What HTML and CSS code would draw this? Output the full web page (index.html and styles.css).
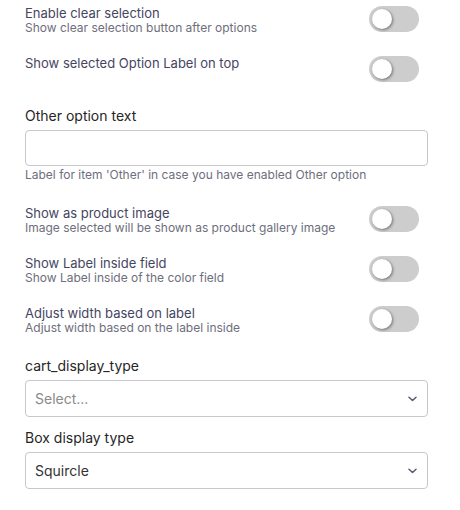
FILE: index.html
```html
<!DOCTYPE html>
<html>
<head>
<meta charset="utf-8">
<link rel="stylesheet" href="styles.css">
</head>
<body>
<div class="panel">
  <div class="toggle-row">
    <div class="toggle-text">
      <div class="t-title">Enable clear selection</div>
      <div class="t-sub">Show clear selection button after options</div>
    </div>
    <span class="switch"><span class="knob"></span></span>
  </div>
  <div class="toggle-row">
    <div class="toggle-text">
      <div class="t-title">Show selected Option Label on top</div>
    </div>
    <span class="switch"><span class="knob"></span></span>
  </div>

  <div class="field first-field">
    <label class="f-label">Other option text</label>
    <input class="text-input" type="text">
    <div class="f-help">Label for item 'Other' in case you have enabled Other option</div>
  </div>

  <div class="toggle-row">
    <div class="toggle-text">
      <div class="t-title">Show as product image</div>
      <div class="t-sub">Image selected will be shown as product gallery image</div>
    </div>
    <span class="switch"><span class="knob"></span></span>
  </div>
  <div class="toggle-row">
    <div class="toggle-text">
      <div class="t-title">Show Label inside field</div>
      <div class="t-sub">Show Label inside of the color field</div>
    </div>
    <span class="switch"><span class="knob"></span></span>
  </div>
  <div class="toggle-row">
    <div class="toggle-text">
      <div class="t-title">Adjust width based on label</div>
      <div class="t-sub">Adjust width based on the label inside</div>
    </div>
    <span class="switch"><span class="knob"></span></span>
  </div>

  <div class="field sel-field">
    <label class="f-label">cart_display_type</label>
    <div class="select">
      <span class="placeholder">Select...</span>
      <svg class="chev" width="9" height="6" viewBox="0 0 9 6"><path d="M1 1.2l3.5 3.3 3.5-3.3" fill="none" stroke="#5a5a6a" stroke-width="1.5" stroke-linecap="round" stroke-linejoin="round"/></svg>
    </div>
  </div>
  <div class="field sel-field2">
    <label class="f-label">Box display type</label>
    <div class="select">
      <span class="value">Squircle</span>
      <svg class="chev" width="9" height="6" viewBox="0 0 9 6"><path d="M1 1.2l3.5 3.3 3.5-3.3" fill="none" stroke="#5a5a6a" stroke-width="1.5" stroke-linecap="round" stroke-linejoin="round"/></svg>
    </div>
  </div>
</div>
</body>
</html>
```
FILE: styles.css
```css
html, body {
  margin: 0;
  padding: 0;
  background: #fff;
}
body {
  font-family: Inter, "Noto Sans", sans-serif;
  color: #222;
}
.panel {
  padding: 6px 32px 0 25px;
  display: flex;
  flex-direction: column;
}
.toggle-row {
  display: flex;
  justify-content: space-between;
  align-items: flex-start;
  padding-right: 9px;
  height: 26px;
  margin-bottom: 24px;
}
.toggle-text {
  display: flex;
  flex-direction: column;
}
.t-title {
  font-size: 13px;
  line-height: 15px;
  color: #45455f;
}
.t-sub {
  font-size: 12px;
  line-height: 13px;
  color: #6e6e7c;
}
.switch {
  position: relative;
  width: 50px;
  height: 26px;
  border-radius: 13px;
  background: #cdcdcd;
  flex: none;
}
.knob {
  position: absolute;
  left: 3px;
  top: 3px;
  width: 20px;
  height: 20px;
  border-radius: 50%;
  background: #fff;
  box-shadow: 1px 1px 3px rgba(0,0,0,0.45);
}
.field {
  display: flex;
  flex-direction: column;
}
.first-field {
  margin-bottom: 24px;
}
.f-label {
  font-size: 14px;
  line-height: 20px;
  color: #262626;
  margin-bottom: 4px;
}
.text-input {
  box-sizing: border-box;
  height: 36px;
  width: 100%;
  border: 1px solid #c8c8cc;
  border-radius: 4px;
  margin: 0;
  padding: 0 9px;
  font: inherit;
}
.f-help {
  margin-top: 2px;
  font-size: 12px;
  line-height: 14px;
  color: #6e6e7c;
}
.sel-field {
  margin-bottom: 11px;
}
.select {
  box-sizing: border-box;
  height: 37px;
  border: 1px solid #c8c8cc;
  border-radius: 4px;
  display: flex;
  align-items: center;
  justify-content: space-between;
  padding: 0 10px 0 9px;
  font-size: 14px;
}
.placeholder {
  color: #8a8a8a;
}
.value {
  color: #333;
}
.chev {
  display: block;
}
```
